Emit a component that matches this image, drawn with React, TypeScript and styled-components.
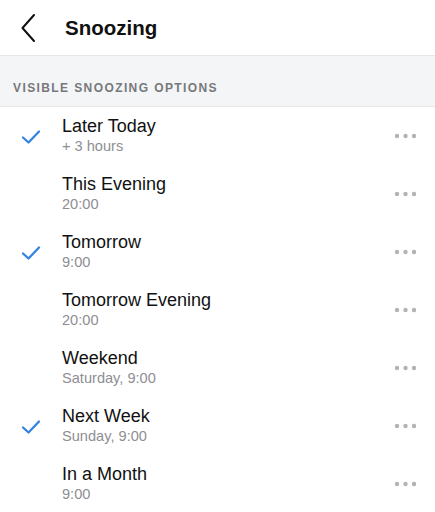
import React from "react";
import styled, { createGlobalStyle } from "styled-components";

const Global = createGlobalStyle`
  html, body { margin: 0; padding: 0; background: #ffffff; }
  body { font-family: "Liberation Sans", Arial, sans-serif; -webkit-font-smoothing: antialiased; }
`;

const Page = styled.div`
  width: 435px;
  height: 512px;
  overflow: hidden;
  background: #fff;
`;

const Header = styled.div`
  height: 55px;
  display: flex;
  align-items: center;
  border-bottom: 1px solid #e6e6e8;
  box-sizing: content-box;
`;

const BackButton = styled.div`
  width: 14px;
  height: 28px;
  margin-left: 21px;
  margin-right: 30px;
  display: flex;
  margin-top: 1px;
`;

const Title = styled.h1`
  margin: 0;
  font-size: 20.5px;
  line-height: 24px;
  font-weight: 700;
  color: #111;
  margin-top: 1px;
`;

const Section = styled.div`
  height: 50px;
  background: #f4f5f6;
  border-bottom: 1px solid #e6e6e8;
  display: flex;
  align-items: flex-end;
  padding-left: 13px;
  box-sizing: content-box;
`;

const SectionLabel = styled.div`
  font-size: 12px;
  line-height: 14px;
  font-weight: 700;
  letter-spacing: 1.4px;
  color: #77787b;
  margin-bottom: 11px;
`;

const Row = styled.div`
  height: 58px;
  display: flex;
  align-items: center;
`;

const CheckSlot = styled.div`
  flex: 0 0 62px;
  padding-left: 20px;
  box-sizing: border-box;
  display: flex;
  align-items: center;
  margin-top: 1px;
`;

const Texts = styled.div`
  flex: 1;
  display: flex;
  flex-direction: column;
  margin-top: -2px;
`;

const ItemTitle = styled.div`
  font-size: 18px;
  line-height: 22px;
  color: #111;
`;

const ItemSub = styled.div`
  font-size: 14.6px;
  line-height: 18px;
  color: #8e8e93;
`;

const More = styled.div`
  width: 22px;
  margin-right: 19px;
  display: flex;
`;

const Check = () => (
  <svg width="22" height="16" viewBox="0 0 22 16">
    <path d="M3 8.5 L8.5 13.5 L19 2.5" fill="none" stroke="#3483e0" strokeWidth="2.3" strokeLinecap="round" strokeLinejoin="round" />
  </svg>
);

const Dots = () => (
  <svg width="22" height="6" viewBox="0 0 22 6">
    <circle cx="3" cy="3" r="2.2" fill="#b3b3b6" />
    <circle cx="11.5" cy="3" r="2.2" fill="#b3b3b6" />
    <circle cx="20" cy="3" r="2.2" fill="#b3b3b6" />
  </svg>
);

const items = [
  { title: "Later Today", sub: "+ 3 hours", checked: true },
  { title: "This Evening", sub: "20:00", checked: false },
  { title: "Tomorrow", sub: "9:00", checked: true },
  { title: "Tomorrow Evening", sub: "20:00", checked: false },
  { title: "Weekend", sub: "Saturday, 9:00", checked: false },
  { title: "Next Week", sub: "Sunday, 9:00", checked: true },
  { title: "In a Month", sub: "9:00", checked: false },
];

export default function App() {
  return (
    <Page>
      <Global />
      <Header>
        <BackButton>
          <svg width="14" height="28" viewBox="0 0 14 28">
            <path d="M13 1 L1.5 14 L13 27" fill="none" stroke="#111" strokeWidth="2" strokeLinecap="round" strokeLinejoin="round" />
          </svg>
        </BackButton>
        <Title>Snoozing</Title>
      </Header>
      <Section>
        <SectionLabel>VISIBLE SNOOZING OPTIONS</SectionLabel>
      </Section>
      {items.map((it) => (
        <Row key={it.title}>
          <CheckSlot>{it.checked && <Check />}</CheckSlot>
          <Texts>
            <ItemTitle>{it.title}</ItemTitle>
            <ItemSub>{it.sub}</ItemSub>
          </Texts>
          <More>
            <Dots />
          </More>
        </Row>
      ))}
    </Page>
  );
}
